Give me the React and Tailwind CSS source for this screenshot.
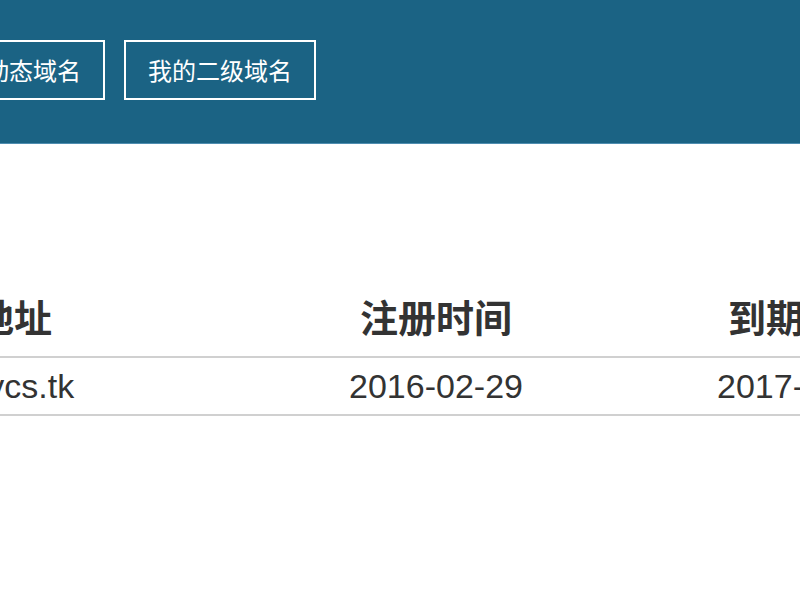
export default function App() {
  const cjk = { fontFamily: '"Noto Sans CJK SC", "Noto Sans", sans-serif' };
  const rows = [{ domain: "mydns.vcs.tk", created: "2016-02-29", expires: "2017-02-28" }];

  return (
    <div className="w-[800px] h-[600px] overflow-hidden bg-white">
      <div className="h-[144px] bg-[#1b6384] border-b border-[#4f8db0] pt-[40px]">
        <div className="flex gap-[19px] -ml-[87px]" style={cjk}>
          <button className="h-[60px] px-[22px] border-2 border-white text-white text-[24px] leading-none whitespace-nowrap">
            我的动态域名
          </button>
          <button className="h-[60px] px-[22px] border-2 border-white text-white text-[24px] leading-none whitespace-nowrap">
            我的二级域名
          </button>
        </div>
      </div>

      <div className="mt-[137px] -ml-[250px]">
        <table className="border-collapse w-[1188px] table-fixed text-[#333]">
          <colgroup>
            <col className="w-[452px]" />
            <col className="w-[468px]" />
            <col className="w-[268px]" />
          </colgroup>
          <thead>
            <tr className="border-b-2 border-[#d0d0d0]" style={cjk}>
              <th className="h-[76px] p-0 pb-[6px] text-[38px] leading-none font-bold text-center whitespace-nowrap">域名地址</th>
              <th className="h-[76px] p-0 pb-[6px] text-[38px] leading-none font-bold text-center whitespace-nowrap">注册时间</th>
              <th className="h-[76px] p-0 pb-[6px] text-[38px] leading-none font-bold text-center whitespace-nowrap">到期时间</th>
            </tr>
          </thead>
          <tbody className="font-['Liberation_Sans',Arial,sans-serif]">
            {rows.map((r) => (
              <tr key={r.domain} className="border-b-2 border-[#d0d0d0]">
                <td className="h-[58px] p-0 text-[34px] leading-none text-center whitespace-nowrap">{r.domain}</td>
                <td className="h-[58px] p-0 text-[34px] leading-none text-center whitespace-nowrap">{r.created}</td>
                <td className="h-[58px] p-0 text-[34px] leading-none text-center whitespace-nowrap">{r.expires}</td>
              </tr>
            ))}
          </tbody>
        </table>
      </div>
    </div>
  );
}
